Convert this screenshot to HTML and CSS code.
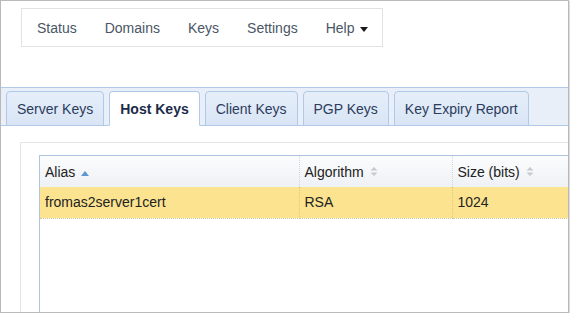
FILE: index.html
```html
<!DOCTYPE html>
<html lang="en">
<head>
  <meta charset="UTF-8">
  <title>Keys - Host Keys</title>
  <link rel="stylesheet" href="styles.css">
</head>
<body>
  <div class="window">
    <nav class="topnav">
      <ul class="topnav__list">
        <li class="topnav__item">Status</li>
        <li class="topnav__item">Domains</li>
        <li class="topnav__item">Keys</li>
        <li class="topnav__item">Settings</li>
        <li class="topnav__item">Help <span class="caret"></span></li>
      </ul>
    </nav>

    <div class="tabs">
      <ul class="tabs__list">
        <li class="tabs__tab">Server Keys</li>
        <li class="tabs__tab tabs__tab--active">Host Keys</li>
        <li class="tabs__tab">Client Keys</li>
        <li class="tabs__tab">PGP Keys</li>
        <li class="tabs__tab">Key Expiry Report</li>
      </ul>

      <div class="tabs__panel">
        <div class="card">
          <div class="grid">
            <table class="grid__table">
              <thead>
                <tr>
                  <th class="grid__col-alias">Alias
                    <svg class="sort" width="8" height="5" viewBox="0 0 8 5"><path d="M0 5 L4 0 L8 5 Z" fill="#5e95d4"/></svg>
                  </th>
                  <th class="grid__col-algo">Algorithm
                    <svg class="sort" width="8" height="9" viewBox="0 0 8 9"><path d="M0.5 3.5 L4 0 L7.5 3.5 Z M0.5 5.5 L4 9 L7.5 5.5 Z" fill="#c9c9c9"/></svg>
                  </th>
                  <th class="grid__col-size">Size (bits)
                    <svg class="sort" width="8" height="9" viewBox="0 0 8 9"><path d="M0.5 3.5 L4 0 L7.5 3.5 Z M0.5 5.5 L4 9 L7.5 5.5 Z" fill="#c9c9c9"/></svg>
                  </th>
                </tr>
              </thead>
              <tbody>
                <tr class="grid__row--selected">
                  <td>fromas2server1cert</td>
                  <td>RSA</td>
                  <td>1024</td>
                </tr>
              </tbody>
            </table>
          </div>
        </div>
      </div>
    </div>
  </div>
</body>
</html>
```

FILE: styles.css
```css
html, body {
  margin: 0;
  font-family: "Liberation Sans", Arial, sans-serif;
  font-size: 14px;
  color: #222;
  background: #fff;
}

.window {
  box-sizing: border-box;
  width: 569px;
  height: 313px;
  border: 1px solid #b9b9b9;
  box-shadow: 1px 1px 0 #dcdcdc;
  overflow: hidden;
}

/* top navigation */
.topnav {
  display: inline-block;
  margin: 7px 0 0 20px;
  border: 1px solid #e2e2e2;
}

.topnav__list {
  display: flex;
  margin: 0;
  padding: 0 0 0 1px;
  list-style: none;
}

.topnav__item {
  padding: 2px 14px 0;
  line-height: 35px;
  color: #4a5666;
}

.caret {
  display: inline-block;
  margin-left: 2px;
  vertical-align: middle;
  border-top: 5px solid #1a1a1a;
  border-left: 4px solid transparent;
  border-right: 4px solid transparent;
}

/* tabs */
.tabs {
  margin-top: 40px;
}

.tabs__list {
  display: flex;
  gap: 5px;
  margin: 0;
  padding: 3px 0 0 5px;
  list-style: none;
  background: #e8eff9;
  border-top: 1px solid #b0c9e8;
  border-bottom: 1px solid #b0c9e8;
}

.tabs__tab {
  margin-bottom: -1px;
  padding: 1px 10px 0;
  line-height: 32px;
  color: #2c3c5c;
  background: linear-gradient(#e6eefa, #d9e5f5);
  border: 1px solid #b0c9e8;
  border-radius: 4px 4px 0 0;
}

.tabs__tab--active {
  font-weight: bold;
  color: #1b2b49;
  background: #fff;
  border-bottom-color: #fff;
}

.tabs__panel {
  padding: 16px 0 0 19px;
}

.card {
  width: 620px;
  height: 220px;
  padding: 12px 0 0 18px;
  border: 1px solid #e6e6e6;
}

.grid {
  height: 220px;
  border: 1px solid #aec4e0;
}

.grid__table {
  border-collapse: collapse;
}

.grid__table th,
.grid__table td {
  height: 31px;
  padding: 0 5px;
  text-align: left;
  font-weight: normal;
  white-space: nowrap;
  box-sizing: border-box;
}

.grid__table th {
  background: linear-gradient(#fbfcfd, #eef1f5);
  border-right: 1px dotted #cfd5dc;
}

.grid__table td {
  border-right: 1px dotted #d9c98e;
  border-bottom: 1px dotted #d2c79c;
}

.grid__col-alias {
  width: 259px;
}

.grid__col-algo {
  width: 153px;
}

.grid__col-size {
  width: 160px;
}

.grid__row--selected td {
  background: #fbe390;
}

.sort {
  margin-left: 2px;
  vertical-align: 1px;
}
```
